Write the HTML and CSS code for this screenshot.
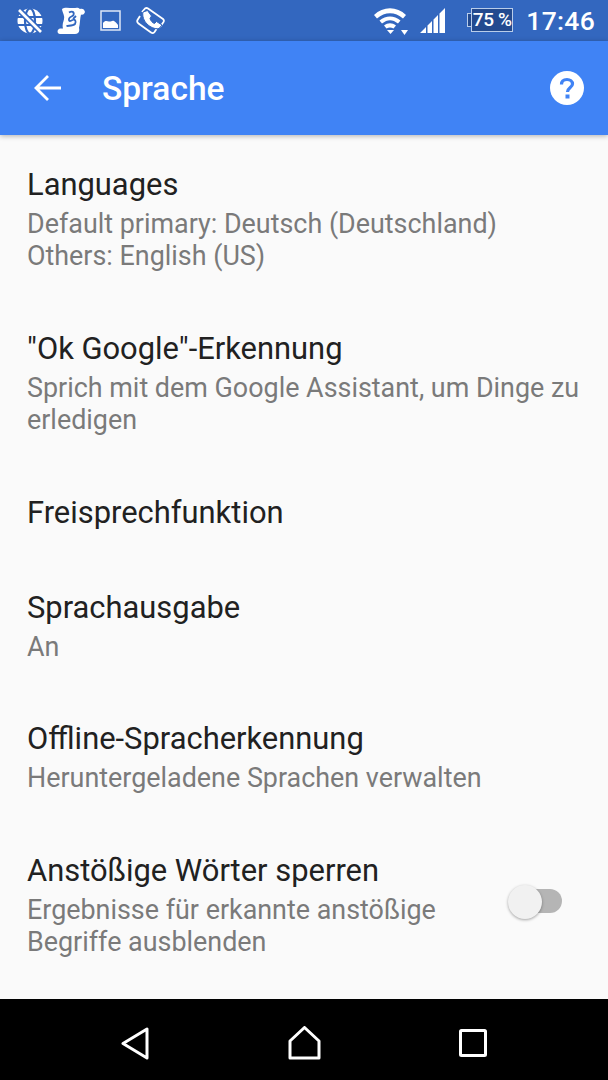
FILE: index.html
```html
<!DOCTYPE html>
<html lang="de">
<head>
<meta charset="utf-8">
<title>Sprache</title>
<link rel="stylesheet" href="styles.css">
</head>
<body>
<div class="screen">
  <div class="statusbar">
    <div class="status-left">
      <svg class="si" width="26" height="26" viewBox="0 0 26 26"><circle cx="13" cy="13" r="12.500" fill="#fff"/><g fill="none" stroke="#3367bf" stroke-width="2.200"><ellipse cx="13" cy="13" rx="5" ry="12.500"/><path d="M1 9H25M1 17H25"/></g><path d="M2 2L24 24" stroke="#3367bf" stroke-width="6"/><path d="M2 2L24 24" stroke="#fff" stroke-width="2.600"/></svg>
      <svg class="si scroll" width="28" height="28" viewBox="0 0 28 28"><path d="M5 2C7 0 12 1 16 1C19 1 21 0 23 2C25 1 27.500 2 28 5C27 8 25 8 24 7.500C23 11 23 17 22 21C23 25 21 27 18 27H3C0 27 -0.500 22.500 3 21.500H6C4.500 16 8 13 7 9C6.500 6 5 4 5 2Z" fill="#fff"/><path d="M12 5.500C15 3.500 17.500 5 16.500 8C15.500 10 12.500 9 12 12C11.500 15 14 14 15.500 13C18 12 19.500 14 18 17C16 19 12 18.500 9.500 19M16 12L19 9" fill="none" stroke="#3367bf" stroke-width="1.800"/></svg>
      <svg class="si" width="21" height="21" viewBox="0 0 21 21"><rect x="1" y="1" width="19" height="19" fill="none" stroke="#dfe8f7" stroke-width="1.500"/><path d="M3 18V13C5 10 7 11 9 11.500C11 12 12 10 14 11C16 12 17 14 18 15V18Z" fill="#fff"/></svg>
      <svg class="si" width="29" height="28" viewBox="0 0 29 28"><path d="M4 9L1.500 13Q0.500 15 2.500 16.500L15 25.500Q17 27 18.500 25L20.500 22" fill="none" stroke="#fff" stroke-width="1.800" stroke-linejoin="round"/><path d="M6 5L9 1.500Q10.500 0.500 12 1.500L27 12Q28.500 13.500 27.500 15L24 20" fill="none" stroke="#fff" stroke-width="1.800" stroke-linejoin="round"/><path d="M7 5C6 9 8 14 11 17C14 20 19 22.500 23 21.500L26 18L20.500 14.500L18.500 16.500C16.500 16 14.500 13.500 14 11.500L15.500 9L11.500 3.500Z" fill="#fff" stroke="#3367bf" stroke-width="1"/></svg>
    </div>
    <div class="status-right">
      <svg class="wifi" width="34" height="28" viewBox="0 0 34 28"><path d="M0 8C9 -1 23 -1 32 8L29 11.500C21 4.500 11 4.500 3 11.500Z" fill="#fff"/><path d="M5.500 13.500C12 8 20 8 26.500 13.500L24 16.500C18.500 12 13.500 12 8 16.500Z" fill="#fff"/><path d="M10 18.500C14 15.500 18 15.500 22 18.500L19.500 21.500C17 20 15 20 12.500 21.500Z" fill="#fff"/><path d="M13 23H20L16.500 27Z" fill="#fff"/><path d="M27 27H34L30.500 32Z" fill="#fff" transform="translate(0 -4)"/></svg>
      <svg class="signal" width="26" height="26" viewBox="0 0 26 26"><path d="M0 25L6 19V25ZM7.500 25V17.500L12 13V25ZM13.500 25V11.500L18 7V25ZM19.500 25V5.500L25 0V25Z" fill="#fff"/></svg>
      <div class="battery"><span class="battery-nub"></span><span class="battery-body">75 %</span></div>
      <span class="clock">17:46</span>
    </div>
  </div>
  <header class="toolbar">
    <svg class="back" width="28" height="28" viewBox="0 0 28 28"><path d="M27 14H2M14 2L2 14L14 26" fill="none" stroke="#fff" stroke-width="2.800"/></svg>
    <h1 class="toolbar-title">Sprache</h1>
    <svg class="help" width="34" height="34" viewBox="0 0 34 34"><circle cx="17" cy="17" r="17" fill="#fff"/><path d="M11.500 13.500C11.500 10 14 8.500 17 8.500C20 8.500 22.500 10.500 22.500 13C22.500 16.500 17.500 16.500 17.500 21" fill="none" stroke="#4083f5" stroke-width="3.200"/><rect x="15.500" y="23.500" width="4" height="4" fill="#4083f5"/></svg>
  </header>
  <main class="list">
    <div class="row row-1">
      <div class="title">Languages</div>
      <div class="summary">Default primary: Deutsch (Deutschland)<br>Others: English (US)</div>
    </div>
    <div class="row row-2">
      <div class="title">"Ok Google"-Erkennung</div>
      <div class="summary">Sprich mit dem Google Assistant, um Dinge zu<br>erledigen</div>
    </div>
    <div class="row row-3">
      <div class="title">Freisprechfunktion</div>
    </div>
    <div class="row row-4">
      <div class="title">Sprachausgabe</div>
      <div class="summary">An</div>
    </div>
    <div class="row row-5">
      <div class="title">Offline-Spracherkennung</div>
      <div class="summary">Heruntergeladene Sprachen verwalten</div>
    </div>
    <div class="row row-6">
      <div class="row-text">
        <div class="title">Anstößige Wörter sperren</div>
        <div class="summary">Ergebnisse für erkannte anstößige<br>Begriffe ausblenden</div>
      </div>
      <div class="switch"><span class="switch-track"></span><span class="switch-thumb"></span></div>
    </div>
  </main>
  <nav class="navbar">
    <svg width="28" height="33" viewBox="0 0 28 33"><path d="M26 2V31L2 16.500Z" fill="none" stroke="#fff" stroke-width="3" stroke-linejoin="round"/></svg>
    <svg width="33" height="34" viewBox="0 0 33 34"><path d="M2 15L16.500 1.500L31 15V32H2Z" fill="none" stroke="#fff" stroke-width="3" stroke-linejoin="round"/></svg>
    <svg width="28" height="28" viewBox="0 0 28 28"><rect x="1.500" y="1.500" width="25" height="25" rx="1" fill="none" stroke="#fff" stroke-width="3"/></svg>
  </nav>
</div>
</body>
</html>
```
FILE: styles.css
```css
* { box-sizing: border-box; }
html, body { margin: 0; padding: 0; }
body { background: #fafafa; font-family: Roboto, "Liberation Sans", sans-serif; }
.screen { width: 608px; height: 1080px; display: flex; flex-direction: column; overflow: hidden; background: #fafafa; }
.statusbar { height: 41px; flex: none; background: #3367bf; display: flex; justify-content: space-between; align-items: center; padding: 0 13px 0 17px; }
.status-left { display: flex; align-items: center; gap: 15px; }
.si { display: block; }
.scroll { margin-left: -1px; }
.status-right { display: flex; align-items: center; }
.wifi { margin-right: 12px; }
.signal { margin-right: 21px; }
.battery { display: flex; align-items: center; margin-right: 13px; margin-top: -2px; }
.battery-nub { width: 4px; height: 14px; background: #234a8f; border: 1.500px solid #b9cdea; border-right: 0; }
.battery-body { width: 42px; height: 24px; border: 1.500px solid #b9cdea; background: #234a8f; color: #fff; font-size: 19px; font-weight: 500; line-height: 21px; text-align: center; white-space: nowrap; letter-spacing: -0.3px; }
.clock { color: #fff; font-size: 26.500px; font-weight: 500; line-height: 30px; letter-spacing: 0.3px; }
.toolbar { height: 94px; flex: none; background: #4083f5; display: flex; align-items: center; padding: 0 24px 0 34px; box-shadow: 0 1px 5px rgba(0,0,0,.3); position: relative; }
.toolbar-title { margin: 2px 0 0 40px; flex: 1; color: #fff; font-size: 33.500px; font-weight: 500; line-height: 40px; }
.list { flex: 1; min-height: 0; }
.row { padding: 0 0 0 27px; white-space: nowrap; }
.row-1 { padding-top: 31px; }
.row-2 { padding-top: 58px; }
.row-3 { padding-top: 58px; }
.row-4 { padding-top: 57px; }
.row-5 { padding-top: 57px; }
.row-6 { padding-top: 58px; padding-right: 27px; display: flex; justify-content: space-between; }
.title { color: #212121; font-size: 30.900px; line-height: 38px; }
.summary { color: #7a7a7a; font-size: 26.900px; line-height: 32px; margin-top: 4px; }
.switch { position: relative; width: 54px; height: 36px; margin: 33px 19px 0 0; flex: none; }
.switch-track { position: absolute; right: 0; top: 4px; width: 46px; height: 24px; border-radius: 12px; background: #b5b5b5; }
.switch-thumb { position: absolute; left: 0; top: 0; width: 34px; height: 34px; border-radius: 50%; background: #f1f1f1; box-shadow: 0 1px 3px rgba(0,0,0,.35); }
.navbar { height: 81px; flex: none; background: #000; display: flex; justify-content: space-between; align-items: center; padding: 7px 121px 0 121px; }
```
